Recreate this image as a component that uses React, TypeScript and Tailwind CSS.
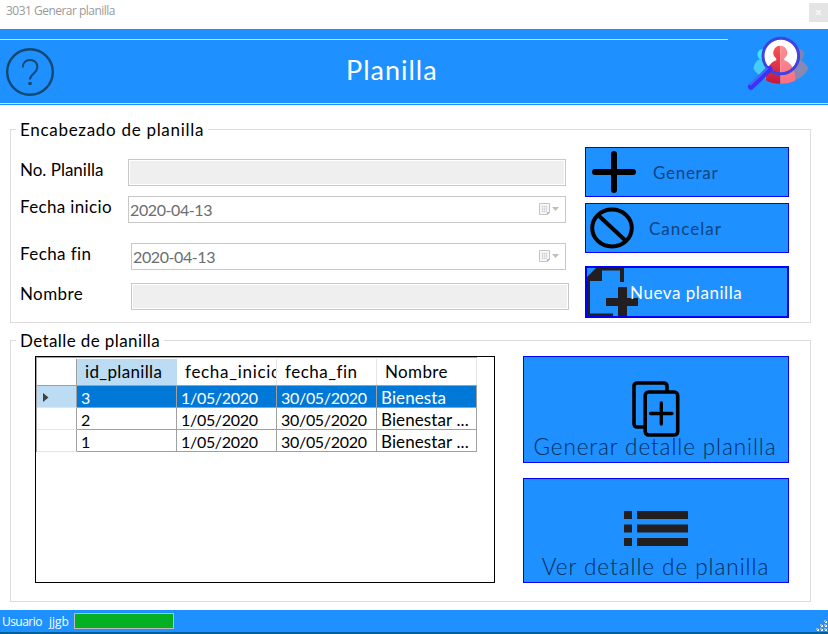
import type { ReactNode } from 'react';

const gothic = "font-['Century_Gothic','Lato',sans-serif]";
const segoe = "font-['Segoe_UI','Open_Sans',sans-serif]";

function HelpIcon() {
  return (
    <svg width="50" height="50" viewBox="0 0 50 50" fill="none" stroke="#12486f">
      <circle cx="25" cy="25" r="22.8" strokeWidth="2.4" />
      <path d="M17.8 20.5C17.8 15.600 20.800 12.900 25 12.900s7.300 2.800 7.300 7c0 3-1.600 4.700-3.600 6.500-2.200 2-3.700 3.200-3.700 6.200" strokeWidth="2" />
      <path d="M25 35v3" strokeWidth="3.200" />
    </svg>
  );
}

function SearchPeopleIcon() {
  return (
    <svg width="62" height="56" viewBox="0 0 62 56">
      <defs>
        <linearGradient id="redLeft" x1="0" y1="0" x2="0" y2="1">
          <stop offset="0" stopColor="#fb5454" />
          <stop offset="1" stopColor="#c4163e" />
        </linearGradient>
        <linearGradient id="redRight" x1="0" y1="0" x2="0" y2="1">
          <stop offset="0" stopColor="#fb9090" />
          <stop offset="1" stopColor="#fb7085" />
        </linearGradient>
      </defs>
      <circle cx="16" cy="18.500" r="5.500" fill="#3fe4fb" />
      <path d="M6.500 32.500c1-6 4-9.500 8-9.500h12v21c-9-1-17-5-20-11.500z" fill="#45cdf5" />
      <circle cx="51" cy="18.500" r="6" fill="#8183b2" />
      <path d="M40 24h14c4 3 7 6.500 7 9-3 6-9 11-18 12z" fill="#8988b3" />
      <circle cx="33.500" cy="19.500" r="17.500" fill="#fff" />
      <path d="M33.300 9.700a7 7 0 0 0-4 12.700v1.800c-7 2.400-10.300 9-10.300 20.300 4 2.200 9 3.200 14.300 3.200z" fill="url(#redLeft)" />
      <path d="M33.300 9.700a7 7 0 0 1 4 12.700v1.800c7 2.400 11 9 11 20.300-4 2.200-9.700 3.200-15 3.200z" fill="url(#redRight)" />
      <circle cx="33.800" cy="20" r="17.800" fill="none" stroke="#3f43e0" strokeWidth="3" />
      <path d="M22.500 33L4 50.800" stroke="#3b32f5" strokeWidth="6" strokeLinecap="round" />
      <path d="M20.500 32L3 48.800" stroke="#4a63ff" strokeWidth="2.400" />
    </svg>
  );
}

function PlusIcon() {
  return (
    <svg width="44" height="42" viewBox="0 0 44 42" stroke="#000" strokeWidth="6" strokeLinecap="round">
      <path d="M22 3v36M3 21h38" />
    </svg>
  );
}

function BanIcon() {
  return (
    <svg width="44" height="42" viewBox="0 0 44 42" fill="none" stroke="#000" strokeWidth="4">
      <ellipse cx="22" cy="21" rx="19.800" ry="18.500" />
      <path d="M8.500 8.500L36 34" />
    </svg>
  );
}

function NewFileIcon() {
  return (
    <svg width="51" height="48" viewBox="0 0 51 48" fill="#231f20">
      <path d="M0 9L9 0h28v14h-4V2.500H15V13H3v32.500h23V48H0z" />
      <path d="M31 19h9v11h11v8H40v10h-9V38H19v-8h12z" />
    </svg>
  );
}

function CopyPlusIcon() {
  return (
    <svg width="48" height="56" viewBox="0 0 48 56" fill="none" stroke="#000" strokeWidth="3.600">
      <path d="M35 10V5a3 3 0 0 0-3-3H5a3 3 0 0 0-3 3v38a3 3 0 0 0 3 3h7" />
      <rect x="13.200" y="11" width="32.500" height="43" rx="3.500" />
      <path d="M29.300 22v21M18.500 32.500h21.500" strokeWidth="3.300" strokeLinecap="round" />
    </svg>
  );
}

function ListIcon() {
  return (
    <svg width="64" height="35" viewBox="0 0 64 35" fill="#231f20">
      <path d="M0 0h8v8H0zM13 0h51v8H13zM0 13.500h8v8H0zM13 13.500h51v8H13zM0 27h8v8H0zM13 27h51v8H13z" />
    </svg>
  );
}

function CalendarDrop() {
  return (
    <svg width="22" height="14" viewBox="0 0 22 14">
      <path d="M.5 .5h10v9l-2 2h-8z" fill="#f8f8f6" stroke="#c6c4be" />
      <path d="M2.500 3.500h6M2.500 6h6M2.500 8.500h5M3.500 2.500v7M5.500 2.500v7M7.500 2.500v7" stroke="#d3d6df" strokeWidth=".8" />
      <path d="M8.500 11.500v-2h2" stroke="#b5b3ad" fill="none" />
      <path d="M13 4h7l-3.500 4z" fill="#bfbfb6" />
    </svg>
  );
}

function Label({ children, className }: { children: ReactNode; className: string }) {
  return <label className={`-mt-1.5 -ml-px shrink-0 text-[17px] whitespace-nowrap ${className}`}>{children}</label>;
}

function TextBox() {
  return (
    <div className="h-[27px] w-[438px] border border-[#c8c8c8] bg-white p-px">
      <div className="h-full bg-[#efefef]" />
    </div>
  );
}

function DateBox({ className }: { className: string }) {
  return (
    <div className={`flex h-[27px] items-center justify-between border border-[#c8c8c8] pr-1 pl-px text-[#6d6d6d] ${className}`}>
      <span className="tracking-[-0.4px]">2020-04-13</span>
      <CalendarDrop />
    </div>
  );
}

const rows = [
  ['3', '1/05/2020', '30/05/2020', 'Bienesta'],
  ['2', '1/05/2020', '30/05/2020', 'Bienestar ...'],
  ['1', '1/05/2020', '30/05/2020', 'Bienestar ...'],
];

const cellText = ['', 'tracking-[-0.3px]', 'tracking-[-0.3px]', 'text-[17px] tracking-[0.1px]'];

function Grid() {
  return (
    <div className="h-[227px] w-[460px] border border-black">
      <div className="w-[441px] border-t border-l border-[#a0a0a0]">
        <div className="flex h-7 border-b border-[#a0a0a0] pt-px text-[17px] leading-[26px]">
          <div className="w-10 border-r border-[#a0a0a0]" />
          <div className="w-[100px] bg-[#bcdcf4] pl-2"><span className="tracking-[0.35px]">id_planilla</span></div>
          <div className="w-[100px] overflow-hidden border-r border-[#e5e5e5] pl-2 whitespace-nowrap"><span className="tracking-[0.7px]">fecha_inicio</span></div>
          <div className="w-[100px] border-r border-[#e5e5e5] pl-2"><span className="tracking-[0.5px]">fecha_fin</span></div>
          <div className="w-[100px] border-r border-[#e5e5e5] pl-2"><span className="tracking-[0.35px]">Nombre</span></div>
        </div>
        {rows.map((row, i) => (
          <div key={row[0]} className="flex h-[22px] leading-[23px]">
            <div className={`flex w-10 items-center border-r border-b border-r-[#a0a0a0] border-b-[#e5e5e5] pt-0.5 pl-1.5 ${i === 0 ? 'bg-[#bcdcf4]' : ''}`}>
              {i === 0 && (
                <svg width="6" height="9" viewBox="0 0 6 9"><path d="M0 0l5.500 4.500L0 9z" fill="#404040" /></svg>
              )}
            </div>
            {row.map((cell, j) => (
              <div key={j} className={`w-[100px] border-r border-b border-[#a0a0a0] pl-1 whitespace-nowrap ${i === 0 ? 'bg-[#0078d7] text-white' : ''}`}>
                <span className={cellText[j]}>{cell}</span>
              </div>
            ))}
          </div>
        ))}
      </div>
    </div>
  );
}

export default function App() {
  return (
    <div className={`flex h-[634px] w-[828px] flex-col overflow-hidden bg-white text-[16px] leading-5 text-black ${gothic}`}>
      <div className={`flex h-[29px] items-start justify-between pl-1.5 text-[12px] text-[#999] ${segoe}`}>
        <span className="pt-px tracking-[-0.52px]">3031 Generar planilla</span>
        <div className="mt-[3px] flex h-[19px] w-[19px] items-center justify-center bg-[#e4e4e4]">
          <svg width="5" height="5" viewBox="0 0 5 5" stroke="#f8f8f8" strokeWidth="1.500"><path d="M0 0l5 5M5 0L0 5" /></svg>
        </div>
      </div>

      <header className="h-[76px] bg-[#1e90ff] pt-2.5">
        <div className="h-px w-[728px] bg-[#c9e2f6]" />
        <div className="flex h-[63px]">
          <div className="w-[346px] pt-[7px] pl-[5px]"><HelpIcon /></div>
          <h1 className="w-[401px] pt-[13px] text-[27px] leading-[34px] text-white"><span className="tracking-[1px]">Planilla</span></h1>
          <div className="-mt-1"><SearchPeopleIcon /></div>
        </div>
        <div className="h-px bg-[#c9e2f6]" />
      </header>

      <main className="h-[505px] px-2.5 pt-3.5">
        <fieldset className="h-[204px] w-[801px] border border-[#dcdcdc]">
          <legend className="ml-[5px] px-1 text-[17px] leading-[21px]"><span className="tracking-[0.7px]">Encabezado de planilla</span></legend>
          <div className="flex pl-2.5">
            <div className="w-[564px] pt-[19px]">
              <div className="flex h-[27px] items-center"><Label className="w-[108px]"><span>No. Planilla</span></Label><TextBox /></div>
              <div className="mt-2.5 flex h-[27px] items-center"><Label className="w-[108px]"><span className="tracking-[0.35px]">Fecha inicio</span></Label><DateBox className="w-[438px]" /></div>
              <div className="mt-5 flex h-[27px] items-center"><Label className="w-[111px]"><span className="tracking-[0.4px]">Fecha fin</span></Label><DateBox className="w-[435px]" /></div>
              <div className="mt-[13px] flex h-[27px] items-center"><Label className="w-[111px]"><span className="tracking-[0.4px]">Nombre</span></Label><TextBox /></div>
            </div>
            <div className="w-[204px] pt-[7px] text-[17px] text-[#0f4480]">
              <button className="flex h-[50px] w-full items-center border border-[#0000ff] bg-[#1e90ff] pl-1.5">
                <PlusIcon /><span className="ml-[17px] pt-px tracking-[0.7px]">Generar</span>
              </button>
              <button className="mt-1.5 flex h-[50px] w-full items-center border border-[#0000ff] bg-[#1e90ff] pl-1">
                <BanIcon /><span className="ml-[15px] pt-px tracking-[1px]">Cancelar</span>
              </button>
              <button className="mt-[13px] flex h-[52px] w-full items-center border-2 border-[#0000ff] bg-[#1e90ff] text-white">
                <NewFileIcon /><span className="-ml-2 pt-px tracking-[0.55px]">Nueva planilla</span>
              </button>
            </div>
          </div>
        </fieldset>

        <fieldset className="mt-[7px] h-[272px] w-[801px] border border-[#dcdcdc]">
          <legend className="ml-[5px] px-1 text-[17px] leading-[21px]"><span className="tracking-[0.4px]">Detalle de planilla</span></legend>
          <div className="flex pt-[5px] pl-6">
            <Grid />
            <div className="ml-7 w-[266px] text-[22.5px] leading-[26px] font-light text-[#052c57]">
              <button className="flex h-[107px] w-full flex-col items-center border border-[#0000ff] bg-[#1e90ff] pt-6">
                <CopyPlusIcon /><span className="-mt-[3px] mr-0.5 tracking-[0.9px] whitespace-nowrap">Generar detalle planilla</span>
              </button>
              <button className="mt-[15px] flex h-[105px] w-full flex-col items-center border border-[#0000ff] bg-[#1e90ff] pt-8">
                <ListIcon /><span className="mt-2 mr-px tracking-[0.95px] whitespace-nowrap">Ver detalle de planilla</span>
              </button>
            </div>
          </div>
        </fieldset>
      </main>

      <footer className={`flex h-6 justify-between border-b-2 border-[#00609f] bg-[#1e90ff] text-[12px] text-white ${segoe}`}>
        <div className="flex pl-0.5">
          <span className="w-10 leading-[23px] tracking-[-0.55px]">Usuario</span>
          <span className="ml-[7px] w-5 leading-[23px]">jjgb</span>
          <div className="mt-[3px] ml-[5px] h-4 w-[100px] border border-[#bcbcbc] bg-[#06b025]" />
        </div>
        <svg className="mt-[9px]" width="13" height="13" viewBox="0 0 13 13">
          <path d="M10 2h2v2h-2zM6 6h2v2H6zM10 6h2v2h-2zM2 10h2v2H2zM6 10h2v2H6zM10 10h2v2h-2z" fill="#fff" />
          <path d="M9 1h2v2H9zM5 5h2v2H5zM9 5h2v2H9zM1 9h2v2H1zM5 9h2v2H5zM9 9h2v2H9z" fill="#b4aaa0" />
        </svg>
      </footer>
    </div>
  );
}
